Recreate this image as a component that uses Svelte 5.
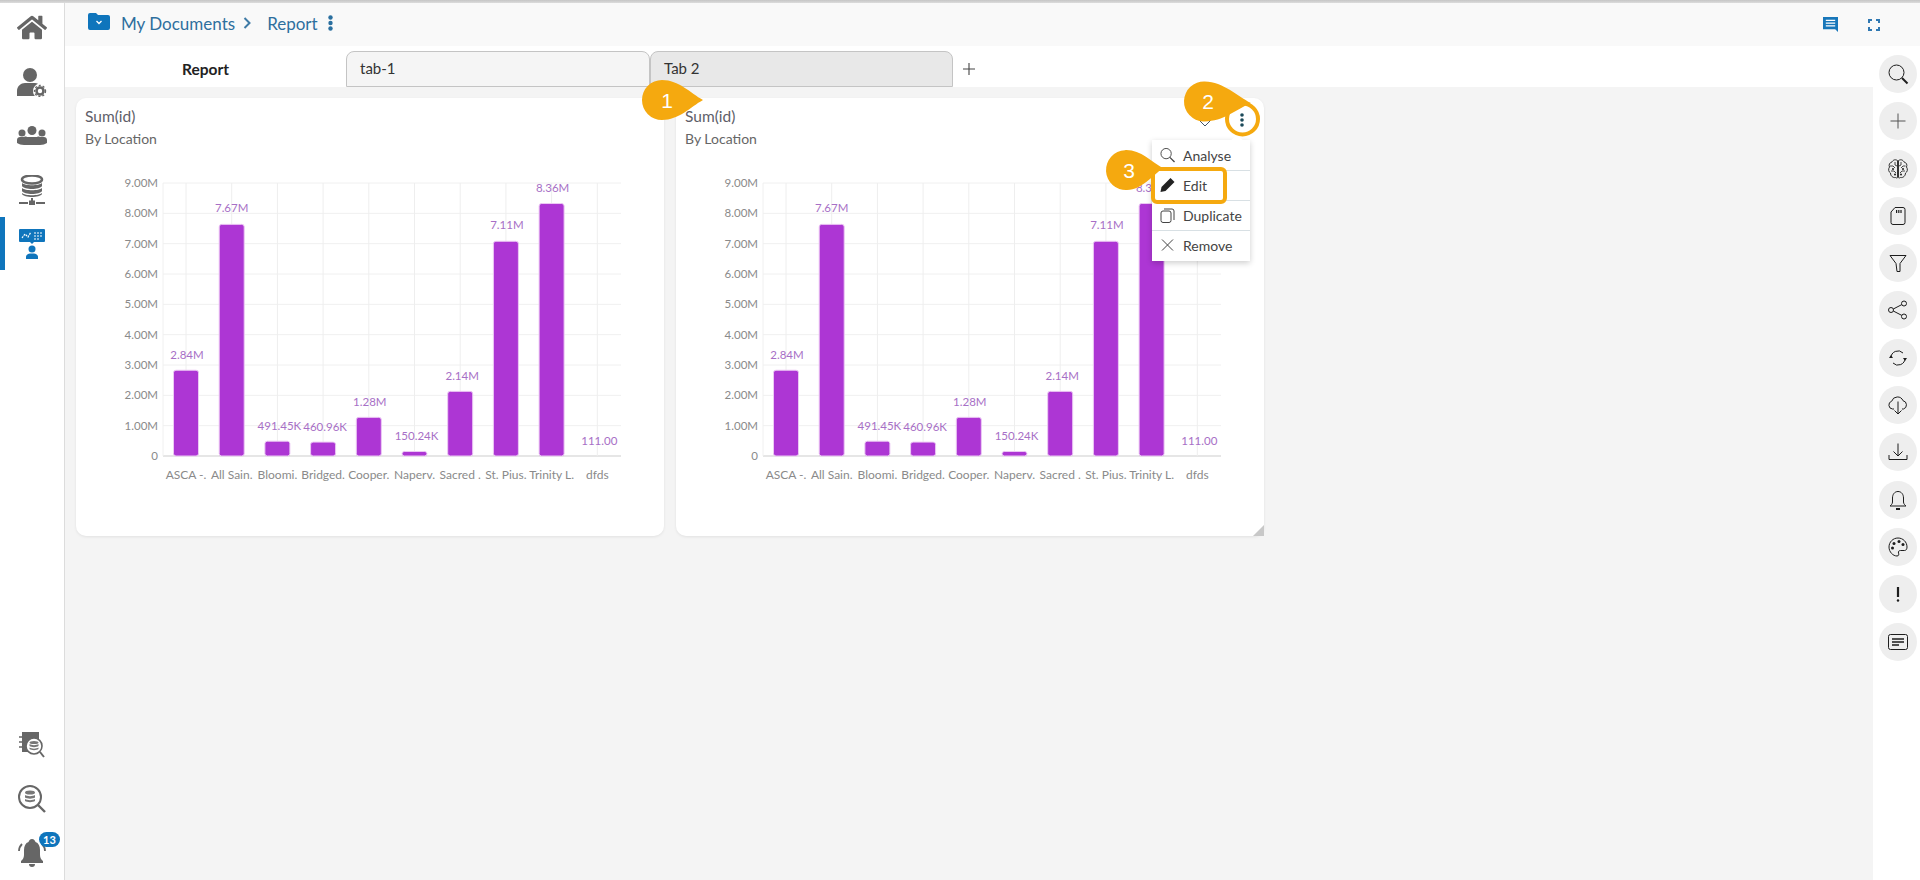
<script>
  const bars = [
    { name: 'ASCA -.', v: 2.84, label: '2.84M', dy: 15, dx: 1 },
    { name: 'All Sain.', v: 7.67, label: '7.67M', dy: 16, dx: 0 },
    { name: 'Bloomi.', v: 0.49, label: '491.45K', dy: 15, dx: 2 },
    { name: 'Bridged.', v: 0.46, label: '460.96K', dy: 15, dx: 2 },
    { name: 'Cooper.', v: 1.28, label: '1.28M', dy: 15, dx: 1 },
    { name: 'Naperv.', v: 0.15, label: '150.24K', dy: 15, dx: 2 },
    { name: 'Sacred .', v: 2.14, label: '2.14M', dy: 15, dx: 2 },
    { name: 'St. Pius.', v: 7.11, label: '7.11M', dy: 16, dx: 1 },
    { name: 'Trinity L.', v: 8.36, label: '8.36M', dy: 16, dx: 1 },
    { name: 'dfds', v: 0, label: '111.00', dy: 15, dx: 2 }
  ];
  const yTicks = ['0', '1.00M', '2.00M', '3.00M', '4.00M', '5.00M', '6.00M', '7.00M', '8.00M', '9.00M'];
  const left = 87, right = 545, top = 13, bottom = 286;
  const step = (bottom - top) / 9;
  const cx = (i) => 110 + i * 45.7;
  const vy = (v) => bottom - v * 30.2;
  const drop = (c) => {
    const l = c.len;
    return `M${l} 0 C${l * 0.68} -7 ${l * 0.38} -20 -2 -20 A20 20 0 0 0 -2 20 C${l * 0.38} 20 ${l * 0.68} 7 ${l} 0Z`;
  };
  const callouts = [
    { n: '1', x: 664, y: 100, len: 39, rot: 0, tx: 3 },
    { n: '2', x: 1206, y: 101.5, len: 45, rot: 2, tx: 2 },
    { n: '3', x: 1128, y: 170, len: 35, rot: -3, tx: 1 }
  ];
  const rail = ['search', 'plus', 'brain', 'card', 'filter', 'share', 'sync', 'cloud', 'download', 'bell', 'palette', 'alert', 'note'];
  const cards = [{ id: 1, active: false }, { id: 2, active: true }];
</script>

<div class="page">
  <aside class="side">
    <nav class="side-top">
      <a class="nav home" href="#home" aria-label="Home">
        <svg width="30" height="27" viewBox="0 0 576 512"><path fill="#666" d="M280.37 148.26L96 300.11V464a16 16 0 0 0 16 16l112.06-.29a16 16 0 0 0 15.92-16V368a16 16 0 0 1 16-16h64a16 16 0 0 1 16 16v95.64a16 16 0 0 0 16 16.05L464 480a16 16 0 0 0 16-16V300L295.67 148.26a12.19 12.19 0 0 0-15.3 0zM571.6 251.47L488 182.56V44.05a12 12 0 0 0-12-12h-56a12 12 0 0 0-12 12v72.61L318.47 43a48 48 0 0 0-61 0L4.34 251.47a12 12 0 0 0-1.6 16.9l25.5 31A12 12 0 0 0 45.15 301l235.22-193.74a12.19 12.19 0 0 1 15.3 0L530.9 301a12 12 0 0 0 16.9-1.6l25.5-31a12 12 0 0 0-1.7-16.93z"/></svg>
      </a>
      <a class="nav" href="#user" aria-label="Users">
        <svg width="30" height="30" viewBox="0 0 30 30"><circle cx="13" cy="8" r="7" fill="#666"/><path fill="#666" d="M0 29v-5c0-5 4-8 8-8h10c1 0 2 .3 3 .8-3 1.500-5 4-5 7 0 2 .6 4 2 5.200z"/><circle cx="23" cy="24" r="3.500" fill="none" stroke="#666" stroke-width="2.600"/><circle cx="23" cy="24" r="5.500" fill="none" stroke="#666" stroke-width="1.400" stroke-dasharray="2 2"/></svg>
      </a>
      <a class="nav" href="#groups" aria-label="Groups">
        <svg width="30" height="20" viewBox="0 0 30 20"><circle cx="15" cy="4.500" r="4.500" fill="#666"/><circle cx="5" cy="7" r="3.500" fill="#666"/><circle cx="25" cy="7" r="3.500" fill="#666"/><path fill="#666" d="M0 17v-3c0-2 1.500-3 3-3h4c2-1 3 0 3 0h10s1-1 3 0h4c1.500 0 3 1 3 3v3c-2 1-4 2-7 2H7c-3 0-5-1-7-2z"/></svg>
      </a>
      <a class="nav" href="#data" aria-label="Data">
        <svg width="26" height="30" viewBox="0 0 26 30"><ellipse cx="13" cy="4.500" rx="10" ry="4" fill="none" stroke="#666" stroke-width="2.500"/><path fill="#666" d="M3 8c3 3 17 3 20 0v3c-2 4-18 4-20 0zM3 13c3 3 17 3 20 0v3c-2 4-18 4-20 0zM3 18c3 3 17 3 20 0v1c-2 4-18 4-20 0z"/><path stroke="#666" stroke-width="2" d="M0 28h9M17 28h9M13 23v3"/><rect x="10" y="25.500" width="6" height="4.500" fill="#666"/></svg>
      </a>
      <a class="nav active" href="#reports" aria-label="Reports">
        <svg width="26" height="30" viewBox="0 0 26 30"><path fill="#0f75bc" d="M1 0h24a1 1 0 0 1 1 1v11a1 1 0 0 1-1 1H15l-2 2-2-2H1a1 1 0 0 1-1-1V1a1 1 0 0 1 1-1z"/><path stroke="#fff" stroke-width="1.200" fill="none" stroke-dasharray="2 1" d="M3 9l3-4 3 3 3-5M15 4h8M15 7h8M15 10h5"/><circle cx="13" cy="20" r="3.500" fill="#0f75bc"/><path fill="#0f75bc" d="M7 30v-2c0-2 2-3.500 4-3.500h4c2 0 4 1.500 4 3.500v2z"/></svg>
      </a>
    </nav>
    <nav class="side-bottom">
      <a class="nav" href="#catalog" aria-label="Catalog">
        <svg width="26" height="28" viewBox="0 0 26 28"><path fill="#666" d="M3 1h17v7a9 9 0 0 0-9 13H3z"/><path stroke="#666" stroke-width="1.600" d="M0 6h4M0 11h4M0 16h4"/><circle cx="15" cy="15" r="8" fill="#fff" stroke="#666" stroke-width="1.600"/><ellipse cx="15" cy="11.500" rx="4.500" ry="1.600" fill="#777"/><path fill="#777" d="M10.500 13c2 1.500 7 1.500 9 0v2c-2 1.500-7 1.500-9 0zM10.500 16.500c2 1.500 7 1.500 9 0v1.500c-2 1.500-7 1.500-9 0z"/><path stroke="#666" stroke-width="2" d="M21 21l4 5"/></svg>
      </a>
      <a class="nav" href="#search-data" aria-label="Search data">
        <svg width="28" height="28" viewBox="0 0 28 28"><circle cx="12" cy="12" r="11" fill="none" stroke="#666" stroke-width="2"/><ellipse cx="12" cy="7.500" rx="5" ry="2" fill="#777"/><path fill="#777" d="M7 10c2 1.500 8 1.500 10 0v2.500c-2 1.500-8 1.500-10 0zM7 14c2 1.500 8 1.500 10 0v2c-2 1.500-8 1.500-10 0z"/><path stroke="#666" stroke-width="2.400" d="M20 20l7 7"/></svg>
      </a>
      <a class="nav bell" href="#alerts" aria-label="Alerts">
        <svg width="28" height="28" viewBox="0 0 28 28"><path fill="#666" d="M14 0c2 0 3 1.500 3.500 3 3 1 4.500 4 4.500 8v5c0 3 1.500 5 3 6v2H3v-2c1.500-1 3-3 3-6v-5c0-4 1.500-7 4.500-8C11 1.500 12 0 14 0zM11 25h6c0 2-1 3-3 3s-3-1-3-3z"/><path fill="none" stroke="#666" stroke-width="1.800" d="M1 12c0-3 1-5 3-7M27 12c0-3-1-5-3-7"/></svg>
        <span class="badge">13</span>
      </a>
    </nav>
  </aside>

  <div class="main">
    <header class="topbar">
      <div class="crumbs">
        <svg class="folder" width="22" height="17" viewBox="0 0 22 17"><path fill="#0f75bc" d="M2 0h6l2 2h10a2 2 0 0 1 2 2v11a2 2 0 0 1-2 2H2a2 2 0 0 1-2-2V2a2 2 0 0 1 2-2z"/><path fill="none" stroke="#fff" stroke-width="1.300" d="M8.500 8l2.500 2.500L13.500 8"/></svg>
        <span class="crumb">My Documents</span>
        <svg width="8" height="12" viewBox="0 0 8 12"><path fill="none" stroke="#3f7ba6" stroke-width="2" d="M1.500 1l5 5-5 5"/></svg>
        <span class="crumb second">Report</span>
        <svg width="5" height="16" viewBox="0 0 5 16"><circle cx="2.500" cy="2.500" r="2.200" fill="#2a6f9f"/><circle cx="2.500" cy="8" r="2.200" fill="#2a6f9f"/><circle cx="2.500" cy="13.500" r="2.200" fill="#2a6f9f"/></svg>
      </div>
      <div class="top-actions">
        <svg width="15" height="15" viewBox="0 0 16 16"><path fill="#1877ba" d="M0 0h16v16l-3-3H0z"/><path stroke="#fff" stroke-width="1.300" d="M3 3.500h10M3 6.500h10M3 9.500h10"/></svg>
        <svg width="12" height="12" viewBox="0 0 12 12"><path fill="none" stroke="#2f78b2" stroke-width="2" d="M1 4V1h3M8 1h3v3M11 8v3H8M4 11H1V8"/></svg>
      </div>
    </header>

    <div class="body">
      <section class="content">
        <div class="tabs">
          <div class="tabs-title">Report</div>
          <div class="tab">tab-1</div>
          <div class="tab on">Tab 2</div>
          <svg class="tab-add" width="12" height="12" viewBox="0 0 12 12"><path stroke="#444" stroke-width="1.100" d="M6 0v12M0 6h12"/></svg>
        </div>
        <div class="cards">
          {#each cards as card (card.id)}
            <article class="card">
              <div class="card-head">
                <div>
                  <h3>Sum(id)</h3>
                  <p>By Location</p>
                </div>
                {#if card.active}
                  <div class="card-tools">
                    <svg class="chev" width="14" height="8" viewBox="0 0 14 8"><path fill="none" stroke="#456" stroke-width="1" d="M1 1l6 6 6-6"/></svg>
                    <svg class="dots" width="4" height="14" viewBox="0 0 4 14"><circle cx="2" cy="2" r="1.800" fill="#1c4a5a"/><circle cx="2" cy="7" r="1.800" fill="#1c4a5a"/><circle cx="2" cy="12" r="1.800" fill="#1c4a5a"/></svg>
                  </div>
                {/if}
              </div>
              <svg class="chart" width="588" height="330" viewBox="0 0 588 330">
                {#each yTicks as t, i}
                  <line x1={left} x2={right} y1={bottom - i * step} y2={bottom - i * step} stroke={i === 0 ? '#e6e6e6' : '#f0f0f0'} stroke-width={i === 0 ? 2 : 1} />
                  <text class="axis" x="82" y={bottom - i * step + 4} text-anchor="end">{t}</text>
                {/each}
                <line x1={left} x2={left} y1={top} y2={bottom} stroke="#f0f0f0" />
                {#each bars as b, i}
                  <line x1={cx(i)} x2={cx(i)} y1={top} y2={bottom} stroke="#eeeeee" />
                {/each}
                {#each bars as b, i}
                  {#if b.v > 0}
                    <rect x={cx(i) - 12.500} y={vy(b.v)} width="25" height={bottom - vy(b.v)} rx="2.500" fill="#ad36d4" stroke="#ecc9f4" stroke-width="1" />
                  {/if}
                  <text class="val" x={cx(i) + b.dx} y={(b.v > 0 ? vy(b.v) : bottom) - b.dy + 4} text-anchor="middle">{b.label}</text>
                  <text class="xlab" x={cx(i)} y="309" text-anchor="middle">{b.name}</text>
                {/each}
              </svg>
              {#if card.active}
                <ul class="menu">
                  <li>
                    <svg width="16" height="16" viewBox="0 0 16 16"><circle cx="6.500" cy="6.500" r="5.500" fill="none" stroke="#444" stroke-width="1"/><path stroke="#444" stroke-width="1.400" d="M10.500 10.500l5 5"/></svg>
                    Analyse
                  </li>
                  <li>
                    <svg width="14" height="14" viewBox="0 0 14 14"><path fill="#222" d="M10 0l4 4-9 9-5 1 1-5z"/></svg>
                    Edit
                  </li>
                  <li>
                    <svg width="14" height="15" viewBox="0 0 14 15"><rect x=".5" y="3" width="10" height="11.500" rx="2" fill="none" stroke="#444"/><path fill="none" stroke="#444" d="M3.500 1h8a2 2 0 0 1 2 2v9"/></svg>
                    Duplicate
                  </li>
                  <li>
                    <svg width="14" height="14" viewBox="0 0 14 14"><path stroke="#444" d="M1.500 1.500l11 11M12.500 1.500l-11 11"/></svg>
                    Remove
                  </li>
                </ul>
                <span class="resize"></span>
              {/if}
            </article>
          {/each}
        </div>
      </section>

      <aside class="rail">
        {#each rail as r}
          <button class="rail-btn" aria-label={r}>
            <svg width="22" height="22" viewBox="0 0 22 22" fill="none" stroke="#1d1d1d" stroke-width="1">
              {#if r === 'search'}
                <circle cx="9.500" cy="9.500" r="7.500"/><path stroke-width="2" d="M15 15l5.500 5.500"/>
              {:else if r === 'plus'}
                <path stroke="#555" d="M11 3.500v15M3.500 11h15"/>
              {:else if r === 'brain'}
                <path stroke-width=".9" d="M10.500 2.500C8 1 6 2 5 4 2.500 4.500 1.500 7 2.500 9 1 11 1.500 14 3.500 15c0 3 2.500 5 5 4.500 1 .7 2 .5 2 0zM11.500 2.500C14 1 16 2 17 4c2.500.5 3.500 3 2.500 5 1.500 2 1 5-1 6 0 3-2.500 5-5 4.500-1 .7-2 .5-2 0z"/><path stroke-width=".8" d="M3 8h3l2 2M8 4v3l2 1M4 13h3l2 2M18.500 8H16l-2 2M14 4v3l-2 1M18 13h-3l-2 2"/><g fill="#1d1d1d" stroke="none"><circle cx="6" cy="11" r="1"/><circle cx="16" cy="11" r="1"/><circle cx="8" cy="16.500" r="1"/><circle cx="14" cy="16.500" r="1"/></g>
              {:else if r === 'card'}
                <path d="M8 2.500h8a2 2 0 0 1 2 2v13a2 2 0 0 1-2 2H6a2 2 0 0 1-2-2V7z"/><path stroke-width="3" stroke-dasharray="1 .8" d="M9 6.500h6"/>
              {:else if r === 'filter'}
                <path d="M3 3.500h16l-6 8v8h-3l-1-8z"/>
              {:else if r === 'share'}
                <circle cx="17" cy="4.500" r="2.500"/><circle cx="4" cy="11" r="2.500"/><circle cx="17" cy="17.500" r="2.500"/><path d="M6.300 10 14.800 5.600M6.300 12l8.500 4.400"/>
              {:else if r === 'sync'}
                <path d="M4 11a7 7 0 0 1 12-5M18 11a7 7 0 0 1-12 5"/><path fill="#1d1d1d" stroke="none" d="M2 11l2-3 2 3zM16 11l2 3 2-3z"/>
              {:else if r === 'cloud'}
                <path d="M7 15H5.500a4 4 0 0 1-.8-7.800A6 6 0 0 1 16 6.700a4.300 4.300 0 0 1 .5 8.300H15"/><path d="M11 7.500V20M7.500 16.500 11 20l3.500-3.500"/>
              {:else if r === 'download'}
                <path d="M11 2.500V15M6.500 10.500 11 15l4.500-4.500"/><path d="M2 14v4.500h18V14"/>
              {:else if r === 'bell'}
                <path d="M11 2.500c-3.500 0-5.500 3-5.500 6.500v4c0 2-1.500 3-2.500 4h16c-1-1-2.500-2-2.500-4V9c0-3.500-2-6.500-5.500-6.500z"/><path stroke-width="2" d="M9 20h4"/>
              {:else if r === 'palette'}
                <path d="M11 2C6 2 2 6 2 11c0 5 4 9 8 9 2 0 2-2 1.500-3-.5-1.500.5-2.500 2-2.500h4c2 0 2.500-2 2.500-3.500C20 6 16 2 11 2z"/><g fill="#1d1d1d" stroke="none"><circle cx="7" cy="7.500" r="1.500"/><circle cx="12" cy="5.500" r="1.500"/><circle cx="16" cy="8.500" r="1.500"/><circle cx="5.500" cy="12" r="1.500"/></g>
              {:else if r === 'alert'}
                <path stroke-width="2.200" d="M11 4v10"/><circle cx="11" cy="17.500" r="1.200" fill="#1d1d1d" stroke="none"/>
              {:else}
                <rect x="1.500" y="3.500" width="19" height="15" rx="2"/><path stroke-width="1.700" d="M5 8h12M5 11h12M5 14h7"/>
              {/if}
            </svg>
          </button>
        {/each}
      </aside>
    </div>
  </div>

  <svg class="annot" width="1920" height="880" viewBox="0 0 1920 880">
    <circle cx="1242.500" cy="119" r="15.500" fill="none" stroke="#f5a90f" stroke-width="4"/>
    <rect x="1153" y="169" width="72" height="33" rx="4" fill="none" stroke="#f5a90f" stroke-width="4"/>
    {#each callouts as c}
      <path transform="translate({c.x} {c.y}) rotate({c.rot})" d={drop(c)} fill="#f5a90f"/>
      <text class="num" x={c.x + c.tx} y={c.y + 7.500} text-anchor="middle">{c.n}</text>
    {/each}
  </svg>
</div>

<style>
  :global(body) { margin: 0; }
  .page {
    position: relative;
    display: flex;
    width: 1920px;
    height: 880px;
    overflow: hidden;
    background: linear-gradient(#c6c6c6, #dcdcdc 3px, #f4f4f4 3px);
    font-family: Lato, "Open Sans", sans-serif;
    box-sizing: border-box;
    padding-top: 3px;
  }
  .side {
    width: 64px;
    flex: none;
    background: #fff;
    border-right: 1px solid #dcdcdc;
    display: flex;
    flex-direction: column;
    justify-content: space-between;
  }
  .nav {
    position: relative;
    display: flex;
    align-items: center;
    justify-content: center;
    height: 54px;
  }
  .side-top .home { height: 48px; margin-bottom: 4px; }
  .active::before {
    content: "";
    position: absolute;
    left: 0;
    top: 0;
    width: 5px;
    height: 53px;
    background: #0f75bc;
  }
  .side-bottom svg { margin-right: 1px; }
  .badge {
    position: absolute;
    left: 39px;
    top: 6px;
    background: #0f75bc;
    color: #fff;
    font-size: 11px;
    font-weight: 700;
    line-height: 15px;
    padding: 0 4px;
    border-radius: 8px;
  }
  .main {
    flex: 1;
    min-width: 0;
    display: flex;
    flex-direction: column;
    background: #f4f4f4;
  }
  .topbar {
    height: 43px;
    flex: none;
    background: #f9f9f9;
    display: flex;
    align-items: center;
    justify-content: space-between;
    box-sizing: border-box;
    padding: 0 40px 3px 23px;
  }
  .crumbs { display: flex; align-items: center; }
  .crumbs .folder { margin: -3px 11px 0 0; }
  .crumb { color: #2e6f9e; font-size: 17px; margin-right: 8px; }
  .crumb.second { margin-left: 16px; margin-right: 10px; }
  .top-actions { display: flex; align-items: center; gap: 30px; padding-top: 3px; }
  .body { flex: 1; display: flex; min-height: 0; }
  .content { flex: 1; min-width: 0; }
  .tabs {
    height: 41px;
    background: #fff;
    display: flex;
    align-items: flex-end;
    box-sizing: border-box;
  }
  .tabs-title {
    width: 281px;
    align-self: center;
    text-align: center;
    font-size: 15.500px;
    font-weight: 700;
    color: #222;
    padding-top: 5px;
    box-sizing: border-box;
  }
  .tab {
    width: 304px;
    height: 36px;
    box-sizing: border-box;
    border: 1px solid #c4c4c4;
    border-radius: 8px 8px 0 0;
    background: #f5f5f5;
    padding: 7px 13px;
    font-size: 15px;
    line-height: 18px;
    color: #333;
  }
  .tab.on { background: #e8e8e8; width: 303px; }
  .tab-add { margin: 0 0 12px 10px; }
  .cards {
    display: flex;
    gap: 12px;
    padding: 11px 0 0 11px;
  }
  .card {
    position: relative;
    width: 588px;
    height: 438px;
    background: #fff;
    border-radius: 10px;
    box-shadow: 0 1px 3px rgba(0, 0, 0, .08);
  }
  .card-head {
    display: flex;
    justify-content: space-between;
    height: 72px;
    box-sizing: border-box;
    padding: 7px 0 0 9px;
  }
  h3, p {
    margin: 0;
    font-size: 14px;
    font-weight: 400;
    line-height: 22px;
    color: #666;
  }
  h3 { color: #5e5e68; height: 23px; font-size: 15.500px; }
  .card-tools {
    display: flex;
    align-items: center;
    height: 30px;
    padding: 0 20px 0 0;
    gap: 28px;
  }
  .chev { margin-top: 6px; }
  .chart { display: block; }
  .axis { font-size: 11.500px; fill: #8a8a8a; }
  .xlab { font-size: 12px; fill: #8a8a8a; }
  .val { font-size: 11.500px; fill: #a76fc6; }
  .menu {
    position: absolute;
    left: 476px;
    top: 42px;
    width: 98px;
    margin: 0;
    padding: 0 0 1px;
    list-style: none;
    background: #fff;
    box-shadow: 0 2px 6px rgba(0, 0, 0, .2);
    font-size: 14px;
    color: #444;
  }
  .menu::before {
    content: "";
    position: absolute;
    right: 9px;
    top: -4px;
    width: 8px;
    height: 8px;
    background: #fff;
    transform: rotate(45deg);
  }
  .menu li {
    display: flex;
    align-items: center;
    gap: 8px;
    height: 28px;
    padding: 0 0 1px 8px;
    border-top: 1px solid #d8e0e4;
    position: relative;
  }
  .menu li:first-child { border-top-color: transparent; }
  .menu svg { width: 15px; flex: none; }
  .resize {
    position: absolute;
    right: 0;
    bottom: 0;
    width: 11px;
    height: 11px;
    background: #c8c8c8;
    clip-path: polygon(100% 0, 100% 100%, 0 100%);
  }
  .rail {
    width: 47px;
    flex: none;
    background: #fff;
    display: flex;
    flex-direction: column;
    align-items: center;
    gap: 9.300px;
    padding: 9px 0 0 2px;
    box-sizing: border-box;
  }
  .rail-btn {
    width: 38px;
    height: 38px;
    flex: none;
    padding: 0;
    border: 0;
    border-radius: 50%;
    background: #eeeeee;
    display: flex;
    align-items: center;
    justify-content: center;
  }
  .annot { position: absolute; left: 0; top: 0; pointer-events: none; }
  .num { font-size: 21px; fill: #fff; font-family: "Liberation Sans", Lato, sans-serif; }
</style>
